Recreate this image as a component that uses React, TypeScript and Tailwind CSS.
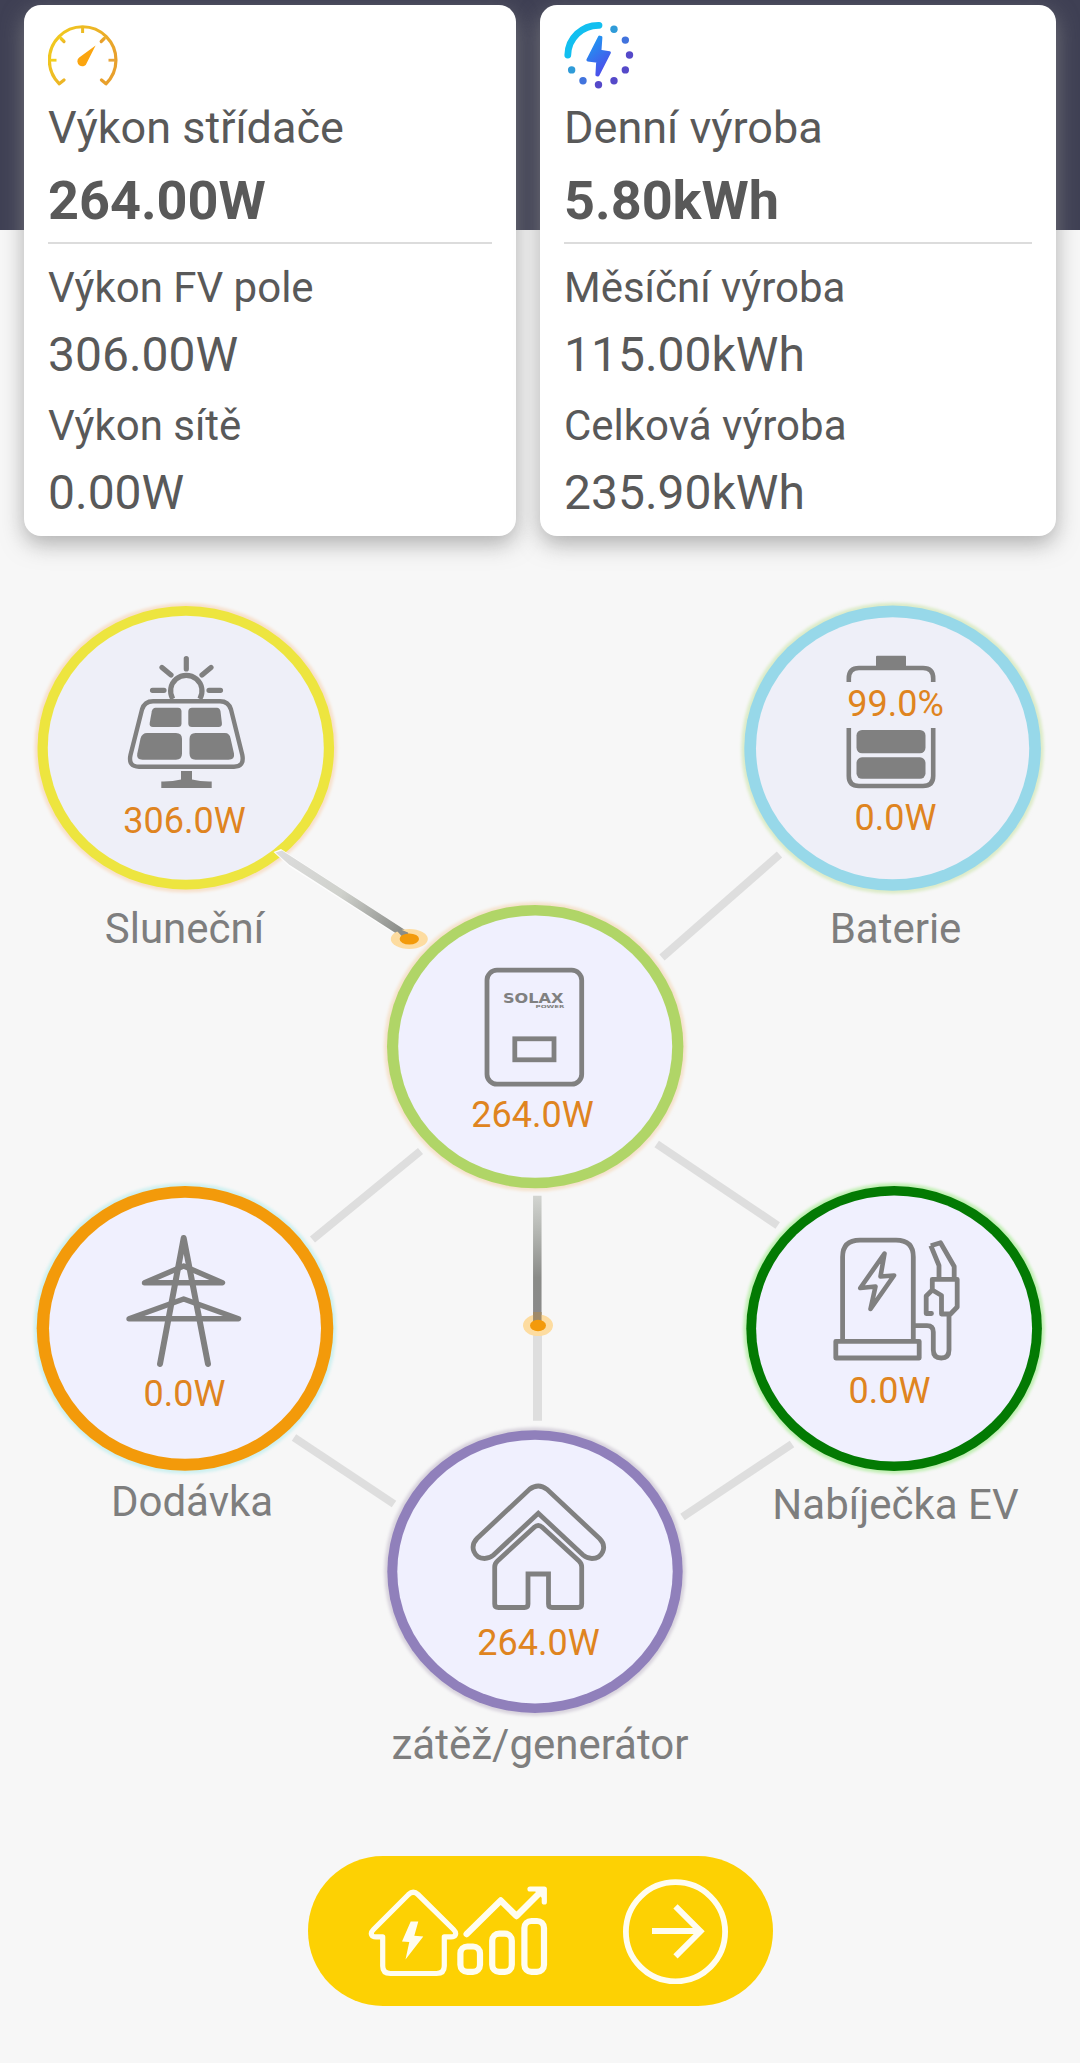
import React from "react";

const GRAY = "#808080";

function GaugeIcon() {
  return (
    <svg viewBox="48 20 70 70" className="block h-[70px] w-[70px]" fill="none">
      <defs>
        <linearGradient id="gauge" x1="0" y1="0" x2="1" y2="0.5">
          <stop offset="0" stopColor="#f2cf1d" />
          <stop offset="1" stopColor="#e8a02c" />
        </linearGradient>
      </defs>
      <g stroke="url(#gauge)" strokeWidth="3.2" strokeLinecap="round" strokeLinejoin="round">
        <path d="M64 80L59.3 83.8A33.3 33.3 0 1 1 106 83.8L101.5 80" />
        <path d="M61 38.5L64 41.5M104.2 38.5L101.2 41.5" />
      </g>
      <path d="M50 60.2H56.5" stroke="#f2cf1d" strokeWidth="2.8" />
      <path d="M82.6 26V33" stroke="#edbb22" strokeWidth="3" />
      <path d="M108.5 60.2H115.5" stroke="#e8a53a" strokeWidth="2.8" />
      <path d="M95.6 45.6L87 62.5A4.9 4.9 0 1 1 79.2 57.5Z" fill="#fba50f" />
    </svg>
  );
}

const DOTS = [
  { a: -60, c: "#2f9bd8" },
  { a: -30, c: "#4173dd" },
  { a: 0, c: "#5549c9" },
  { a: 30, c: "#5549c9" },
  { a: 60, c: "#5549c9" },
  { a: 90, c: "#5549c9" },
  { a: 120, c: "#4173dd" },
  { a: 150, c: "#2f9bd8" },
];

function DailyIcon() {
  return (
    <svg viewBox="564 20 70 70" className="block h-[70px] w-[70px]" fill="none">
      <defs>
        <linearGradient id="bolt" x1="0" y1="0" x2="0.5" y2="1">
          <stop offset="0" stopColor="#18a2f3" />
          <stop offset="1" stopColor="#4b50ea" />
        </linearGradient>
      </defs>
      <path d="M567.8 55A30.7 30.2 0 0 1 599 25.3" stroke="#12bff0" strokeWidth="6.8" strokeLinecap="round" />
      {DOTS.map((d) => (
        <circle
          key={d.a}
          cx={598.5 + 31 * Math.cos((d.a * Math.PI) / 180)}
          cy={55 + 29.8 * Math.sin((d.a * Math.PI) / 180)}
          r="3.7"
          fill={d.c}
        />
      ))}
      <path
        d="M599.5 37L601 37.4L600 51.2L609.5 52.6L598 75L596.8 74.8L597.6 61.4L587.8 60Z"
        fill="url(#bolt)"
        stroke="url(#bolt)"
        strokeWidth="2.8"
        strokeLinejoin="round"
      />
    </svg>
  );
}

type CardProps = {
  icon: React.ReactNode;
  title: string;
  value: string;
  rows: [string, string][];
};

function Card({ icon, title, value, rows }: CardProps) {
  return (
    <section className="rounded-[17px] bg-white px-6 pt-[15px] pb-[15px] text-[#595959] shadow-[0_8px_22px_rgba(140,140,140,0.68)]">
      {icon}
      <h2 className="mt-[11px] text-[45px] leading-[54px] whitespace-nowrap">{title}</h2>
      <p className="mt-[14px] text-[54px] leading-[64px] font-bold">{value}</p>
      <hr className="mt-[9px] mb-[19px] border-t-2 border-[#dcdcdc]" />
      <dl className="flex flex-col gap-[18px]">
        {rows.map(([k, v]) => (
          <div key={k}>
            <dt className="text-[42px] leading-[50px] whitespace-nowrap">{k}</dt>
            <dd className="mt-[14px] text-[48px] leading-[56px]">{v}</dd>
          </div>
        ))}
      </dl>
    </section>
  );
}

const RINGS = [
  { cx: 185.8, cy: 747.8, rx: 148.3, ry: 141.7, ix: 138, iy: 132, c: "#ede53f", halo: "#f7e0cb", fill: "#eeeff8" },
  { cx: 892.6, cy: 748.2, rx: 148.3, ry: 142.6, ix: 136.6, iy: 131, c: "#97d8e9", halo: "#dcebc8", fill: "#eeeff8" },
  { cx: 535.2, cy: 1046.6, rx: 148.2, ry: 141.7, ix: 137, iy: 131.2, c: "#b0d567", halo: "#f5e2cc", fill: "#f0f0fe" },
  { cx: 185, cy: 1328.3, rx: 148.3, ry: 142.4, ix: 136, iy: 130.5, c: "#f39a0a", halo: "#cdf0f0", fill: "#f0f0fe" },
  { cx: 894.1, cy: 1328.5, rx: 147.8, ry: 142.4, ix: 138, iy: 133, c: "#037a03", halo: "#c0efb2", fill: "#f0f0fe" },
  { cx: 535, cy: 1571.6, rx: 147.7, ry: 141.4, ix: 137.7, iy: 131.8, c: "#9080bb", halo: "#d8d3dd", fill: "#f0f0fe" },
];

function Diagram() {
  return (
    <svg viewBox="0 536 1080 1264" className="block h-[1264px] w-[1080px]" fill="none">
      <defs>
        <linearGradient id="flowSun" gradientUnits="userSpaceOnUse" x1="278" y1="852" x2="405" y2="935">
          <stop offset="0" stopColor="#dcdcdc" />
          <stop offset="0.5" stopColor="#cfd1cc" />
          <stop offset="0.8" stopColor="#a3a5a1" />
          <stop offset="1" stopColor="#858783" />
        </linearGradient>
        <linearGradient id="flowHome" gradientUnits="userSpaceOnUse" x1="0" y1="1195" x2="0" y2="1322">
          <stop offset="0" stopColor="#d3d5d1" />
          <stop offset="0.3" stopColor="#b3b5b1" />
          <stop offset="0.65" stopColor="#8a8b88" />
          <stop offset="1" stopColor="#8a8a8a" />
        </linearGradient>
        <filter id="soft" x="-10%" y="-10%" width="120%" height="120%">
          <feGaussianBlur stdDeviation="1.6" />
        </filter>
      </defs>

      {RINGS.map((r) => (
        <g key={`${r.cx}-${r.cy}`}>
          <ellipse cx={r.cx} cy={r.cy} rx={r.rx + 3} ry={r.ry + 3} fill={r.halo} filter="url(#soft)" />
          <ellipse cx={r.cx} cy={r.cy} rx={r.rx} ry={r.ry} fill={r.c} />
          <ellipse cx={r.cx} cy={r.cy} rx={r.ix} ry={r.iy} fill={r.fill} />
        </g>
      ))}

      {/* idle links */}
      <g stroke="#dedede" strokeWidth="8">
        <path d="M779.5 854.5L662 957.5" />
        <path d="M312.5 1239.5L420.5 1151" />
        <path d="M656.7 1144L777.7 1225.5" />
        <path d="M294 1437.5L394 1504" />
        <path d="M792 1444L682.5 1517" />
        <path d="M537.5 1320V1420.7" strokeWidth="9" />
      </g>

      {/* active links */}
      <path d="M273.500 852L281 849L408 931.500L402 938.500L290 867Z" fill="#fdfdfd" />
      <path d="M275.500 852.500L282 850.500L409 932.500L402.500 937.500L289 864.500Z" fill="url(#flowSun)" />
      <ellipse cx="409.3" cy="939" rx="18.5" ry="10" fill="#fddca0" />
      <path d="M399.500 929L408 932.500L409 936L403 937.500L397 931Z" fill="#8b8d89" />
      <ellipse cx="409.3" cy="939" rx="9.7" ry="5.6" fill="#f39a0a" />
      <path d="M537.3 1195.7V1322" stroke="url(#flowHome)" strokeWidth="8.5" />
      <ellipse cx="538" cy="1325.3" rx="15" ry="10.8" fill="#fddca0" />
      <path d="M537.3 1312V1322" stroke="#a08a68" strokeWidth="8.5" />
      <ellipse cx="538" cy="1325.5" rx="8" ry="5.7" fill="#f39a0a" />

      {/* solar panel */}
      <g stroke={GRAY} strokeWidth="5.2" strokeLinecap="round">
        <path d="M186.3 658.5V669M162 667.5L171 675M211 667.5L202 675M152.5 690.3H164M209 690.3H220.5" />
        <path d="M172.8 699A15.7 15.7 0 1 1 199.8 699" strokeLinecap="butt" />
        <path
          d="M153 701.2H220Q228.5 701.2 231 709.5L242.3 755Q244.5 766.7 234 766.7H139Q128 766.7 130.5 755L142 709.5Q144.5 701.2 153 701.2Z"
          strokeWidth="4.4"
        />
      </g>
      <g fill={GRAY}>
        <path d="M155.5 707.7H178Q181.5 707.7 181.5 711.5V723.5Q181.5 727 178 727H153Q149 727 149.7 723L151.8 711.2Q152.6 707.7 155.5 707.7Z" />
        <path d="M217 707.7H192Q188.3 707.7 188.3 711.5V723.5Q188.3 727 192 727H218.5Q222.4 727 221.9 723L220.5 711.2Q219.8 707.7 217 707.7Z" />
        <path d="M147 733H176Q182 733 182 739V753.5Q182 759.7 176 759.7H142.5Q136 759.7 137.3 753.5L140.5 738.5Q142 733 147 733Z" />
        <path d="M225 733H195.5Q189.5 733 189.5 739V753.5Q189.5 759.7 195.5 759.7H228.5Q235 759.7 234 753.5L230.6 738.5Q229.6 733 225 733Z" />
        <path d="M181 771H192V779.5Q201 781.8 211.7 781.5V788H161.3V781.5Q172 781.8 181 779.5Z" />
      </g>

      {/* battery */}
      <g stroke={GRAY} strokeWidth="4.6">
        <path d="M848.8 682V678.5Q848.8 668 859 668H923Q933.2 668 933.2 678.5V682" />
        <path d="M848.8 728V776Q848.8 786 859 786H923Q933.2 786 933.2 776V728" />
      </g>
      <g fill={GRAY}>
        <rect x="876" y="655.7" width="30" height="12" rx="1" />
        <rect x="856.5" y="730" width="69" height="23.3" rx="5.5" />
        <rect x="856.5" y="757.3" width="69" height="21.5" rx="5.5" />
      </g>

      {/* inverter */}
      <g stroke={GRAY} strokeWidth="4.8">
        <rect x="487" y="970.2" width="94.7" height="114" rx="10" />
        <rect x="514.8" y="1038.8" width="39.2" height="21" strokeWidth="4.8" />
      </g>
      <text x="503" y="1003" fontSize="13.2" fontWeight="700" fill={GRAY} textLength="60.5" lengthAdjust="spacingAndGlyphs" fontFamily="'DejaVu Sans', sans-serif">
        SOLAX
      </text>
      <text x="535.5" y="1008" fontSize="4.2" fontWeight="700" fill={GRAY} textLength="29" lengthAdjust="spacingAndGlyphs" fontFamily="'DejaVu Sans', sans-serif">
        POWER
      </text>

      {/* pylon */}
      <g stroke={GRAY} strokeWidth="5.4" strokeLinecap="round" strokeLinejoin="round">
        <path d="M160 1364L183.7 1238L208 1364" strokeWidth="6" />
        <path d="M144.5 1282.7L183.7 1266L222.5 1282.7Z" />
        <path d="M129 1318.8L183.7 1299L238.5 1318.8Z" />
      </g>

      {/* charger */}
      <g stroke={GRAY} strokeWidth="4.8" strokeLinejoin="round">
        <path d="M842.6 1341V1257Q842.6 1240.2 860 1240.2H896Q913.3 1240.2 913.3 1257V1341" />
        <rect x="835.8" y="1341.3" width="83.4" height="16.7" />
        <path d="M884.500 1253.500L860.300 1288L875.500 1286.500L870.500 1309L894 1275.500L880.500 1276.500Z" strokeWidth="4.6" />
        <path d="M930.8 1245.7L940.5 1242.8L954.2 1266.5V1279M930.8 1245.7L939 1265.5V1279" />
        <path d="M932.3 1290V1279.3H957.2V1307L950.5 1314H941.5V1295.5L932.3 1290L926.2 1296V1313.5H931.5" strokeLinecap="round" />
        <path d="M913.3 1325.6H927Q933.3 1325.6 933.3 1332V1350Q933.3 1358 941.3 1358Q949 1358 949 1350V1314" />
      </g>

      {/* house */}
      <g stroke={GRAY} strokeWidth="4.8">
        <path d="M529.5 1489.3Q538.3 1482.8 547 1489.3L599.5 1538.5C608 1547 602 1558.5 592 1558.5Q587 1558.5 583 1555L538.3 1513.3L493.5 1555Q489.5 1558.5 484.5 1558.5C474.5 1558.5 469 1547 477 1538.5Z" />
        <path d="M534 1527.5Q538.3 1523.5 542.5 1527.5L579 1561Q581.7 1563.5 581.7 1567V1604Q581.7 1607.5 578 1607.5H552Q548.5 1607.5 548.5 1604V1574H528V1604Q528 1607.5 524.5 1607.5H498.5Q494.7 1607.5 494.7 1604V1567Q494.7 1563.5 497.5 1561Z" />
      </g>
    </svg>
  );
}

/* Positions are offsets inside the diagram canvas; each text is centred on its x. */
function Value({ place, children }: { place: string; children: string }) {
  return (
    <span className={`absolute -translate-x-1/2 text-[36px] leading-none whitespace-nowrap text-[#df8420] ${place}`}>
      {children}
    </span>
  );
}

function Label({ place, children }: { place: string; children: string }) {
  return (
    <span className={`absolute -translate-x-1/2 text-[42px] leading-none whitespace-nowrap text-[#7e7e7e] ${place}`}>
      {children}
    </span>
  );
}

function StatsButton() {
  return (
    <button
      aria-label="Statistiky"
      className="mx-auto mt-[56px] flex h-[150px] w-[465px] items-center justify-between rounded-full bg-[#fdd103] pr-[45px] pl-[60px]"
    >
      <svg viewBox="368 1885 180 92" className="block h-[92px] w-[180px]" fill="none" stroke="#fffdf0" strokeLinejoin="round">
        <path
          d="M408.5 1894.5Q413.3 1890 418 1894.5L453.5 1929.5C457.5 1933.5 455.5 1936.8 451 1936.8H444.3V1966Q444.3 1973.5 436.5 1973.5H390.5Q382.7 1973.5 382.7 1966V1936.8H376C371.5 1936.8 369.5 1933.5 373.5 1929.5Z"
          strokeWidth="5.2"
        />
        <path d="M410.700 1921.500H418.300L414.300 1935.700L423.300 1936.500L405.500 1959.500L409.300 1942L402 1941.500Z" fill="#fffdf0" stroke="none" />
        <g strokeWidth="6.2">
          <rect x="460.4" y="1946.5" width="19.6" height="25.3" rx="7" />
          <rect x="492.2" y="1933.7" width="19.6" height="38.1" rx="7" />
          <rect x="524.4" y="1921" width="19.6" height="50.8" rx="7" />
        </g>
        <path d="M466.7 1934L500.7 1900.5L516.5 1916L541 1891.5" strokeWidth="6.4" strokeLinecap="round" />
        <path d="M530 1889H544.3V1902" strokeWidth="5.2" strokeLinecap="round" />
        <path d="M532 1888L546 1888V1902Z" fill="#fffdf0" stroke="none" />
      </svg>
      <svg viewBox="0 0 106 106" className="block h-[106px] w-[106px]" fill="none" stroke="#fffdf0">
        <circle cx="53.5" cy="53.8" r="49.6" strokeWidth="5.8" />
        <path d="M30 53H77M53.500 28.300L78.500 53.300L53.500 78.300" strokeWidth="6" />
      </svg>
    </button>
  );
}

export default function App() {
  return (
    <main className="h-[2063px] w-[1080px] overflow-hidden bg-[#f7f7f7] font-['Roboto',sans-serif]">
      <div className="h-[230px] bg-[#3f4054]" />
      <div className="relative -mt-[225px] grid grid-cols-[492px_516px] gap-6 px-6">
        <Card
          icon={<GaugeIcon />}
          title="Výkon střídače"
          value="264.00W"
          rows={[
            ["Výkon FV pole", "306.00W"],
            ["Výkon sítě", "0.00W"],
          ]}
        />
        <Card
          icon={<DailyIcon />}
          title="Denní výroba"
          value="5.80kWh"
          rows={[
            ["Měsíční výroba", "115.00kWh"],
            ["Celková výroba", "235.90kWh"],
          ]}
        />
      </div>

      <div className="relative h-[1264px]">
        <Diagram />
        <Value place="left-[184.5px] top-[267px]">306.0W</Value>
        <Label place="left-[184.5px] top-[372px]">Sluneční</Label>
        <Value place="left-[895.5px] top-[150px]">99.0%</Value>
        <Value place="left-[895.5px] top-[264px]">0.0W</Value>
        <Label place="left-[895.5px] top-[372px]">Baterie</Label>
        <Value place="left-[532.5px] top-[561px]">264.0W</Value>
        <Value place="left-[184.5px] top-[840px]">0.0W</Value>
        <Label place="left-[192px] top-[945px]">Dodávka</Label>
        <Value place="left-[889.5px] top-[837px]">0.0W</Value>
        <Label place="left-[895.5px] top-[948px]">Nabíječka EV</Label>
        <Value place="left-[538.5px] top-[1089px]">264.0W</Value>
        <Label place="left-[540px] top-[1188px]">zátěž/generátor</Label>
      </div>

      <StatsButton />
    </main>
  );
}
